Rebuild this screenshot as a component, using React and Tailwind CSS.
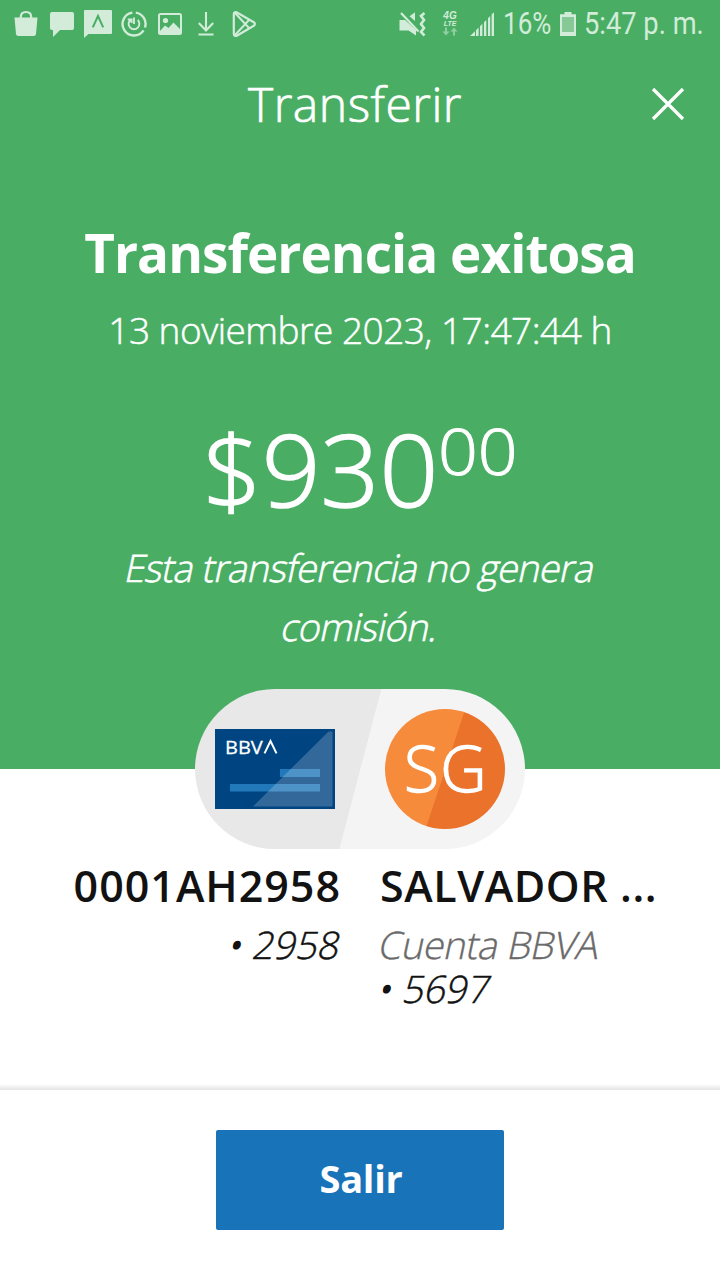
function NotificationIcons() {
  return (
    <div className="flex items-center gap-[10px] text-[#d2ecd9]">
      <svg width="26" height="48" viewBox="13 0 26 48" fill="currentColor">
        <path d="M14.5 17.5H37.5L36 34Q35.8 36 33.6 36H18.4Q16.2 36 16 34Z" />
        <path d="M20.8 20V17Q20.8 12 26 12T31.2 17V20" fill="none" stroke="currentColor" strokeWidth="2.2" />
      </svg>
      <svg width="26" height="48" viewBox="49 0 26 48" fill="currentColor">
        <path d="M52 12H72.2Q74 12 74 14V28Q74 30 72.2 30H60L53 37V30H52Q50 30 50 28V14Q50 12 52 12Z" />
      </svg>
      <svg className="-mx-px" width="28" height="48" viewBox="84 0 28 48" fill="currentColor">
        <path d="M85 10H111Q112 10 112 11V33Q112 34 111 34H88.5L84 38V11Q84 10 85 10Z" />
        <path d="M92.8 27.3L98 16L103.2 27.3" fill="none" stroke="#49ae64" strokeWidth="2" />
      </svg>
      <svg width="26" height="48" viewBox="121 0 26 48" fill="none" stroke="currentColor" strokeWidth="2.4">
        <path d="M132.4 12.6A11.5 11.5 0 1 0 143.6 30.4M145 27.5A11.5 11.5 0 0 0 135.8 12.6" />
        <path d="M130.2 20A5.4 5.4 0 1 0 137.8 20M127.8 19.4H131.6V23M134 17.5V24" strokeWidth="1.9" />
      </svg>
      <svg width="26" height="48" viewBox="157 0 26 48" fill="currentColor">
        <rect x="159" y="14" width="22" height="20" rx="1.5" fill="none" stroke="currentColor" strokeWidth="2" />
        <circle cx="165.5" cy="20.5" r="2.6" />
        <path d="M160 31L165 25.5L168.5 28L173.5 22.5L180 29V33.5H160Z" />
      </svg>
      <svg width="26" height="48" viewBox="193 0 26 48" fill="none" stroke="currentColor" strokeWidth="2.1">
        <path d="M206 12V30M198.8 23L206 30.5L213.2 23M198.5 34.5H213.5" />
      </svg>
      <svg width="28" height="48" viewBox="229 0 28 48" fill="none" stroke="currentColor" strokeWidth="2.2" strokeLinejoin="round">
        <path d="M236.5 12.3L253.8 22.2Q256 24 253.8 25.8L236.8 35.7Q233.8 36.5 233.8 33.5V14.2Q234 11.5 236.5 12.3Z" />
        <path d="M235 13L249.5 28.5M235 35L249.5 19.5" strokeWidth="1.9" />
      </svg>
    </div>
  );
}

function SystemStatus() {
  return (
    <div className="flex items-center text-[#d2ecd9]">
      <svg width="28" height="48" viewBox="398 0 28 48" fill="currentColor">
        <path d="M399.5 20H405L416 30V35.5L408.5 30.5H399.5Z" />
        <path d="M409.5 16.2L415 12.3V21Z" />
        <path d="M401 13L418.5 31.5" stroke="currentColor" strokeWidth="2.2" />
        <path d="M424.5 13L421 16L424 20L421 24L424 28L421 32L424.5 35.5" fill="none" stroke="currentColor" strokeWidth="2.6" />
      </svg>
      <div className="ml-[15px] flex h-[26px] w-[18px] flex-col items-center font-['Liberation_Sans'] font-bold italic">
        <span className="h-[9px] text-[10px] leading-[10px]">4G</span>
        <span className="h-[7px] text-[7px] leading-[7px]">LTE</span>
        <svg width="16" height="9" viewBox="0 0 16 9" fill="#8fcea0">
          <path d="M3 0.5H5V4.5H7.5L4 8.5L0.5 4.5H3Z" />
          <path d="M11 8.5H13V4.5H15.5L12 0.5L8.5 4.5H11Z" />
        </svg>
      </div>
      <svg className="ml-[10px]" width="26" height="48" viewBox="469 0 26 48" fill="currentColor">
        <path d="M470 36L475 31.2V36ZM476 30.2L478.6 27.6V36H476ZM480 26.2L482.4 23.8V36H480ZM484 22.2L486.3 19.9V36H484ZM488 18.2L490.2 16V36H488ZM491.6 14.6L494 12.2V36H491.6Z" />
      </svg>
      <div className="ml-[8px] w-[49px] font-['Roboto'] text-[31px] leading-[50px] whitespace-nowrap">
        <span className="inline-block origin-left scale-x-[0.84]">16%</span>
      </div>
      <svg className="ml-[7px]" width="18" height="48" viewBox="559 0 18 48" fill="currentColor">
        <path d="M560 14.2H564.5V12H571.5V14.2H576V36H560Z" />
        <path d="M562 17H574V32H562Z" fill="#86c996" />
      </svg>
      <div className="ml-[7px] w-[121px] font-['Roboto'] text-[31px] leading-[50px] whitespace-nowrap">
        <span className="inline-block origin-left scale-x-[0.88]">5:47 p. m.</span>
      </div>
    </div>
  );
}

function CardThumbnail() {
  return (
    <div className="relative h-20 w-[120px] bg-[#004481]">
      <svg width="120" height="80" viewBox="0 0 120 80">
        <path d="M65 40H105V48H65ZM15 55H105V62.5H15Z" fill="#2279b9" />
        <path d="M113.5 2.5H117.5V77.5H38Z" fill="#fff" fillOpacity="0.2" />
        <path d="M49.5 24.4L55.5 12L61.5 24.4" fill="none" stroke="#fff" strokeWidth="2" />
      </svg>
      <span className="absolute top-[6px] left-[10px] origin-left scale-x-[1.11] font-['Open_Sans'] text-[18px] leading-[25px] font-medium text-white [-webkit-text-stroke:0.3px_currentColor]">
        BBV
      </span>
    </div>
  );
}

export default function App() {
  return (
    <div className="flex h-[1280px] w-[720px] flex-col overflow-hidden bg-white font-['Open_Sans',sans-serif] text-[#121212]">
      <section className="flex h-[769px] shrink-0 flex-col items-center bg-[#49ae64] text-white">
        <div className="flex h-12 w-full items-center justify-between pl-[13px] pr-[15px]">
          <NotificationIcons />
          <SystemStatus />
        </div>
        <header className="grid h-[109px] w-full grid-cols-[1fr_auto_1fr] items-center">
          <h1 className="col-start-2 ml-[-10px] pt-0.5 text-[48px] leading-none font-light tracking-[0.5px] [-webkit-text-stroke:0.7px_currentColor]">
            Transferir
          </h1>
          <button className="mt-0.5 mr-[34px] justify-self-end" aria-label="Cerrar">
            <svg width="36" height="36" viewBox="0 0 36 36" stroke="#fff" strokeWidth="3.2">
              <path d="M3 3L33 33M33 3L3 33" />
            </svg>
          </button>
        </header>
        <h2 className="mt-[56px] text-[53px] leading-[80px] font-bold tracking-[-0.95px]">Transferencia exitosa</h2>
        <p className="text-[37px] leading-[74px] font-light tracking-[-0.5px] [-webkit-text-stroke:0.5px_currentColor]">
          13 noviembre 2023, 17:47:44 h
        </p>
        <div className="mt-8 flex h-[139px] items-start font-light">
          <span className="w-[235px] text-[100px] leading-[138px] [-webkit-text-stroke:1.6px_currentColor]">
            <span className="inline-block origin-left scale-x-[1.03]">$930</span>
          </span>
          <span className="w-[80px] text-[64px] leading-[104px] [-webkit-text-stroke:1px_currentColor]">
            <span className="inline-block origin-left scale-x-[1.09]">00</span>
          </span>
        </div>
        <p className="pl-px text-center text-[38px] leading-[59px] font-light tracking-[-0.75px] [-webkit-text-stroke:0.6px_currentColor]">
          <span className="block -skew-x-12">Esta transferencia no genera</span>
          <span className="block -skew-x-12">comisión.</span>
        </p>
      </section>

      <div className="relative mx-auto -mt-20 flex h-40 w-[330px] shrink-0 items-center justify-between rounded-full bg-[linear-gradient(104.7deg,#e8e8e8_50%,#f4f4f4_50.2%)] px-5">
        <CardThumbnail />
        <div className="flex size-[120px] justify-center rounded-full bg-[linear-gradient(108.3deg,#f68b3c_50%,#ea722b_50.5%)] pl-0.5 text-[64px] leading-[117px] font-light tracking-[1.5px] text-white [-webkit-text-stroke:1.3px_currentColor]">
          SG
        </div>
      </div>

      <section className="grid grow grid-cols-2 gap-x-10 text-[38px] leading-[44px] font-light">
        <div className="text-right">
          <h3 className="-mr-px text-[43px] leading-[73px] font-semibold tracking-[1px]">0001AH2958</h3>
          <p className="-mr-px -skew-x-12 [-webkit-text-stroke:0.5px_currentColor]">
            <span className="[-webkit-text-stroke:2px_currentColor]">•</span> 2958
          </p>
        </div>
        <div>
          <h3 className="text-[43px] leading-[73px] font-semibold tracking-[0.6px]">SALVADOR ...</h3>
          <p className="-skew-x-12 tracking-[-0.45px] text-[#6a6a6a] [-webkit-text-stroke:0.4px_currentColor]">Cuenta BBVA</p>
          <p className="-skew-x-12 [-webkit-text-stroke:0.5px_currentColor]">
            <span className="[-webkit-text-stroke:2px_currentColor]">•</span> 5697
          </p>
        </div>
      </section>

      <div className="h-1.5 shrink-0 bg-linear-to-b from-white to-[#e3e3e3]" />
      <footer className="flex h-[190px] shrink-0 justify-center pt-10">
        <button className="h-[100px] w-72 rounded-[2px] bg-[#1973b8] pb-[3px] pl-0.5 text-[38px] font-bold tracking-[-0.3px] text-white">
          Salir
        </button>
      </footer>
    </div>
  );
}
